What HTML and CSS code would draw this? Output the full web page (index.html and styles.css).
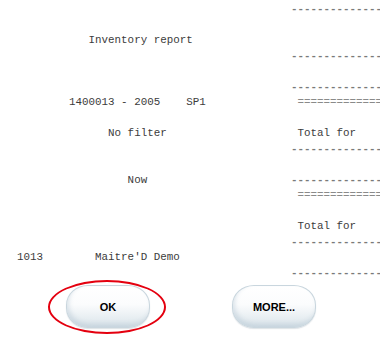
FILE: index.html
```html
<!DOCTYPE html>
<html lang="en">
<head>
    <meta charset="UTF-8">
    <title>Inventory report</title>
    <link rel="stylesheet" href="styles.css">
</head>
<body>

    <div class="report">
<pre class="col-left">


           Inventory report



        1400013 - 2005    SP1

              No filter


                 Now




1013        Maitre'D Demo</pre>
<pre class="col-right"><span class="rule">--------------</span>


<span class="rule">--------------</span>

<span class="rule">--------------</span>
<span class="rule2"> =============</span>

 Total for
<span class="rule">--------------</span>

<span class="rule">--------------</span>
<span class="rule2"> =============</span>

 Total for
<span class="rule">--------------</span>

<span class="rule">--------------</span></pre>
    </div>

    <div class="actions">
        <button class="pill marked">OK</button>
        <button class="pill">MORE...</button>
    </div>

</body>
</html>
```

FILE: styles.css
```css
html, body {
    margin: 0;
    padding: 0;
    background: #fff;
    overflow: hidden;
}
body {
    width: 380px;
    height: 339px;
}
.report {
    display: flex;
    height: 279px;
    padding-top: 2px;
}
pre {
    margin: 0;
    font-family: "Liberation Mono", "Courier New", monospace;
    font-size: 10.85px;
    line-height: 15.5px;
    color: #3c3c3c;
    white-space: pre;
}
.col-left {
    width: 274px;
    padding-left: 17px;
    flex: none;
}
.col-right {
    flex: 1;
}
.rule {
    color: #7a7a7a;
    font-weight: bold;
}
.rule2 {
    color: #8a8a8a;
}
.actions {
    display: flex;
    gap: 82px;
    padding-left: 66px;
    margin-top: 4px;
}
.pill {
    position: relative;
    width: 84px;
    height: 43px;
    border: 1px solid #c9d6de;
    border-radius: 22px / 20px;
    background: linear-gradient(#ffffff 0%, #fbfcfd 45%, #e6edf1 80%, #d8e2e8 100%);
    box-shadow: inset 2px -3px 4px rgba(180, 198, 210, 0.45), 0 1px 1px rgba(160, 175, 185, 0.35);
    font-family: "Liberation Sans", Arial, sans-serif;
    font-size: 11px;
    font-weight: bold;
    color: #000;
    padding: 0;
}
.marked::after {
    content: "";
    position: absolute;
    left: -19px;
    top: -6px;
    width: 114px;
    height: 50px;
    border: 2.5px solid #e4000f;
    border-radius: 50%;
}
```
